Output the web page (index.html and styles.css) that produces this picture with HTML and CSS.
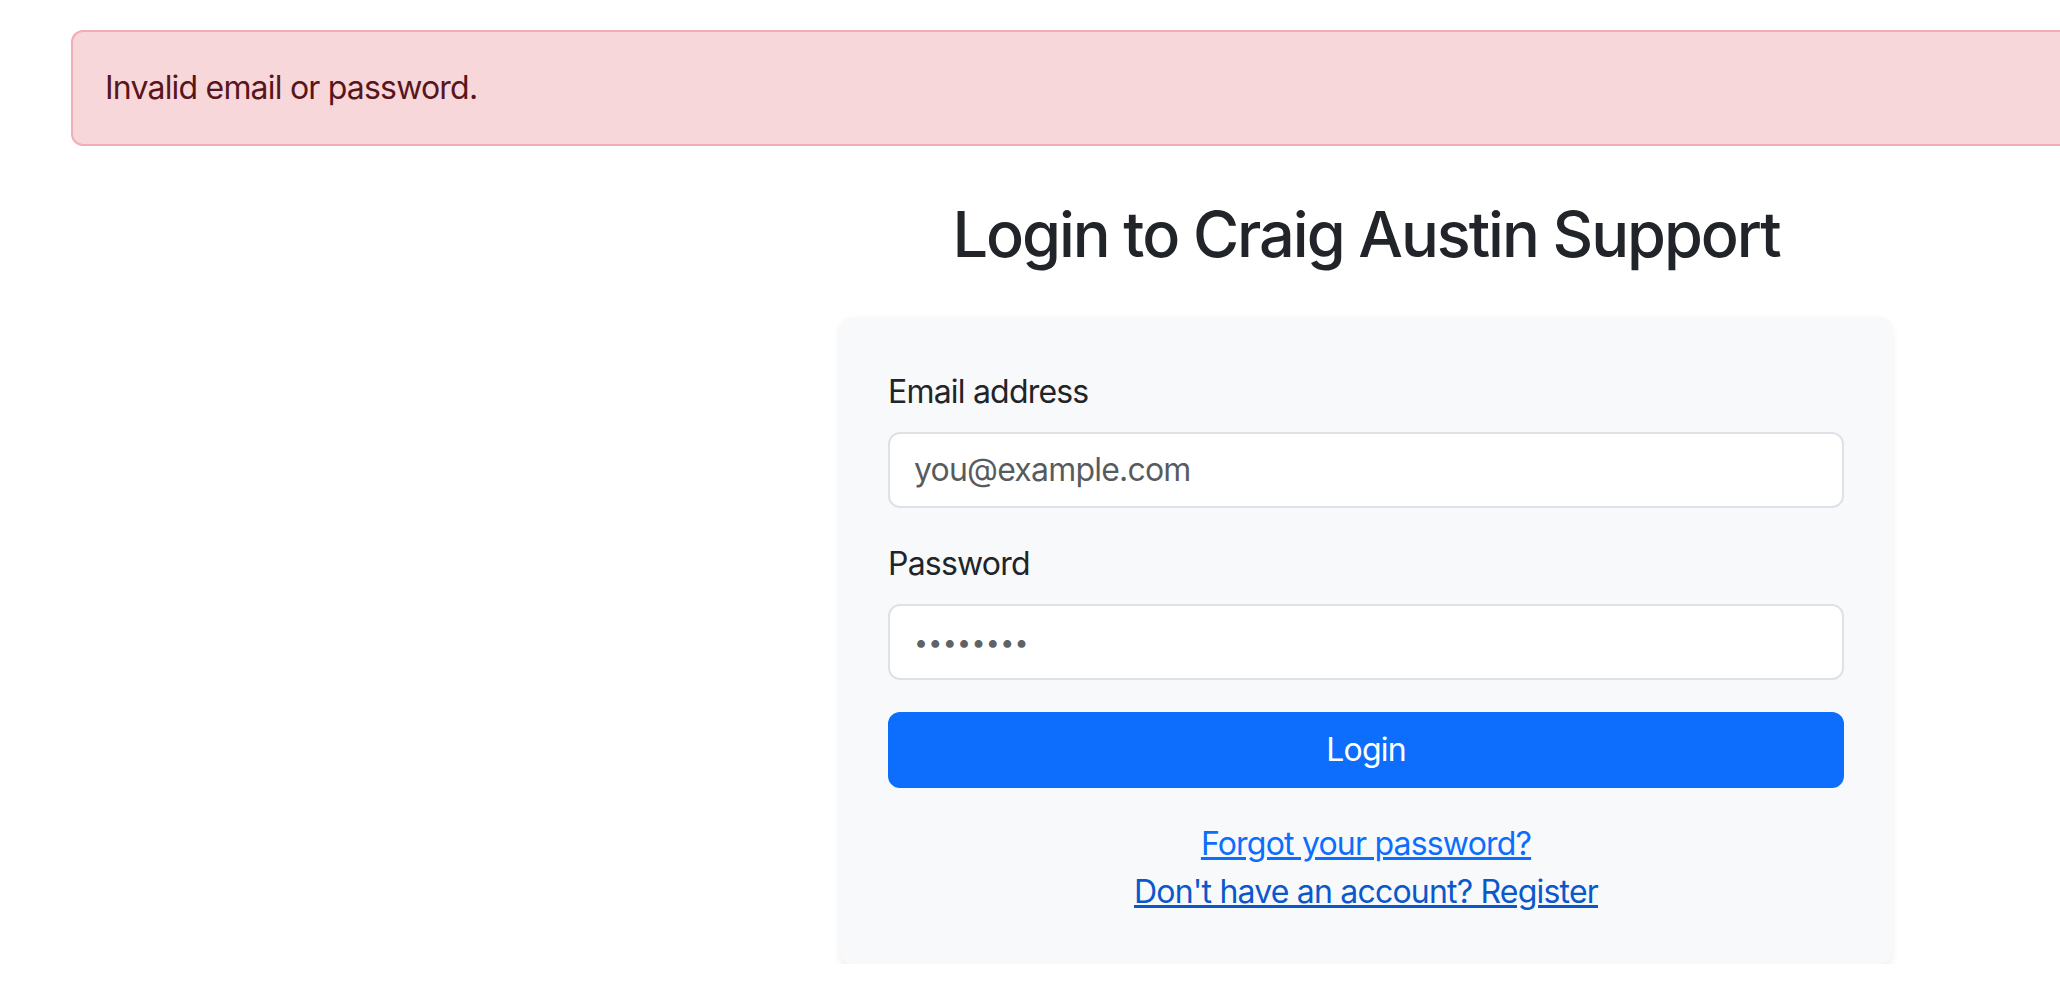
FILE: index.html
```html
<!DOCTYPE html>
<html lang="en">
<head>
<meta charset="utf-8">
<title>Login to Craig Austin Support</title>
<link rel="stylesheet" href="styles.css">
</head>
<body>
<div class="page">
  <div class="alert">Invalid email or password.</div>
  <h1 class="title">Login to Craig Austin Support</h1>
  <div class="card">
    <form class="form">
      <div class="field">
        <label class="label" for="email">Email address</label>
        <input class="input" id="email" type="email" placeholder="you@example.com">
      </div>
      <div class="field">
        <label class="label" for="password">Password</label>
        <input class="input input-pass" id="password" type="password" value="password">
      </div>
      <button class="btn" type="button">Login</button>
      <div class="links">
        <a class="link" href="#forgot">Forgot your password?</a>
        <a class="link link-visited" href="#register">Don't have an account? Register</a>
      </div>
    </form>
  </div>
</div>
</body>
</html>
```
FILE: styles.css
```css
html, body {
  margin: 0;
  padding: 0;
  overflow: hidden;
  background: #fff;
}
body {
  font-family: Inter, "Noto Sans", "Liberation Sans", sans-serif;
  font-size: 32px;
  line-height: 1.5;
  letter-spacing: -0.8px;
  color: #212529;
}
.page {
  width: 2590px;
  margin-left: 71px;
  padding-top: 30px;
  display: flex;
  flex-direction: column;
  align-items: center;
}
.alert {
  align-self: stretch;
  box-sizing: border-box;
  padding: 32px;
  border: 2px solid #f1aeb5;
  border-radius: 12px;
  background: #f8d7da;
  color: #58151c;
}
.title {
  margin: 51px 0 44px;
  font-size: 63px;
  font-weight: 500;
  line-height: 1.2;
  letter-spacing: -2.05px;
  color: #212529;
}
.card {
  width: 1052px;
  box-sizing: border-box;
  padding: 51px 48px 48px;
  background: #f8f9fa;
  border-radius: 12px;
  box-shadow: 0 4px 8px rgba(0, 0, 0, 0.07);
}
.form {
  display: flex;
  flex-direction: column;
}
.field {
  display: flex;
  flex-direction: column;
  margin-bottom: 32px;
}
.label {
  margin-bottom: 16px;
}
.input {
  box-sizing: border-box;
  width: 100%;
  height: 76px;
  padding: 12px 24px;
  font: inherit;
  letter-spacing: -0.8px;
  color: #212529;
  background: #fff;
  border: 2px solid #dee2e6;
  border-radius: 12px;
  outline: none;
}
.input::placeholder {
  color: rgba(33, 37, 41, 0.75);
}
.input-pass {
  font-size: 25px;
  letter-spacing: 0.3px;
  color: #5f6368;
}
.btn {
  box-sizing: border-box;
  width: 100%;
  height: 76px;
  padding: 12px 24px;
  font: inherit;
  letter-spacing: -0.8px;
  color: #fff;
  background: #0d6efd;
  border: 2px solid #0d6efd;
  border-radius: 12px;
}
.links {
  margin-top: 32px;
  display: flex;
  flex-direction: column;
  align-items: center;
}
.link {
  color: #0d6efd;
  text-decoration: underline;
}
.link-visited {
  color: #0a58ca;
}
```
